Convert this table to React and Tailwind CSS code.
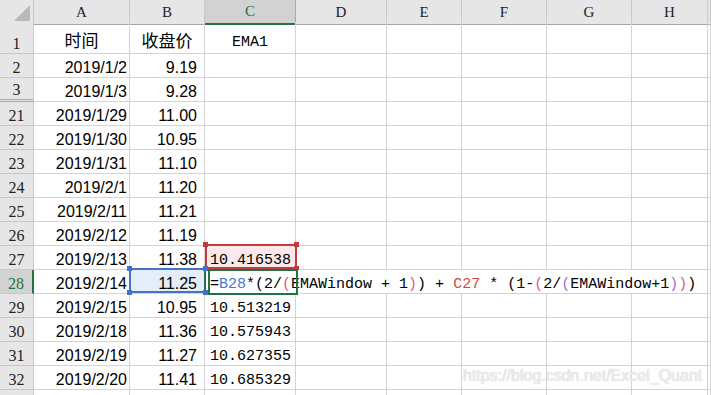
import React from 'react'

const COLS = 'grid grid-cols-[34px_96px_75px_91px_91px_75px_85px_85px_76px_1fr]'

const rows = [
  { n: '1', a: '时间', b: '收盘价', c: 'EMA1', head: true },
  { n: '2', a: '2019/1/2', b: '9.19' },
  { n: '3', a: '2019/1/3', b: '9.28', hidden: true },
  { n: '21', a: '2019/1/29', b: '11.00' },
  { n: '22', a: '2019/1/30', b: '10.95' },
  { n: '23', a: '2019/1/31', b: '11.10' },
  { n: '24', a: '2019/2/1', b: '11.20' },
  { n: '25', a: '2019/2/11', b: '11.21' },
  { n: '26', a: '2019/2/12', b: '11.19' },
  { n: '27', a: '2019/2/13', b: '11.38', c: '10.416538', ref: true },
  { n: '28', a: '2019/2/14', b: '11.25', active: true },
  { n: '29', a: '2019/2/15', b: '10.95', c: '10.513219' },
  { n: '30', a: '2019/2/18', b: '11.36', c: '10.575943' },
  { n: '31', a: '2019/2/19', b: '11.27', c: '10.627355' },
  { n: '32', a: '2019/2/20', b: '11.41', c: '10.685329' },
  { n: '', a: '', b: '' },
]

const formula = [
  ['=', 'text-black'],
  ['B28', 'text-[#4a78cc]'],
  ['*(2/', 'text-black'],
  ['(', 'text-[#e0607a]'],
  ['EMAWindow + 1', 'text-black'],
  [')', 'text-[#e0607a]'],
  [') + ', 'text-black'],
  ['C27', 'text-[#d9433f]'],
  [' * (1-', 'text-black'],
  ['(', 'text-[#e0607a]'],
  ['2/', 'text-black'],
  ['(', 'text-[#a56bd6]'],
  ['EMAWindow+1', 'text-black'],
  [')', 'text-[#a56bd6]'],
  [')', 'text-[#e0607a]'],
  [')', 'text-black'],
]

function Handles({ color }) {
  return (
    <>
      <span className={`absolute -left-[4px] -top-[4px] w-[5px] h-[5px] ${color}`} />
      <span className={`absolute -right-[4px] -top-[4px] w-[5px] h-[5px] ${color}`} />
      <span className={`absolute -left-[4px] -bottom-[4px] w-[5px] h-[5px] ${color}`} />
      <span className={`absolute -right-[4px] -bottom-[4px] w-[5px] h-[5px] ${color}`} />
    </>
  )
}

export default function App() {
  const cell = 'flex items-end border-r border-b border-[#d4d4d4] leading-[18px] whitespace-nowrap overflow-hidden'
  const mono = "font-['Liberation_Mono',monospace] text-[15px] leading-[14px] pb-[1px]"

  return (
    <div className="relative w-[711px] h-[395px] overflow-hidden bg-white font-['Liberation_Sans','Noto_Sans_CJK_SC',sans-serif] text-[16px] text-black">
      {/* column headers */}
      <div className={`${COLS} h-[22px] font-['Liberation_Serif',serif] text-[15px] text-[#222]`}>
        <div className="flex items-end justify-end pr-[3px] pb-[3px] bg-[#e6e6e6] border-r border-b border-r-[#c8c8c8] border-b-[#a6a6a6]">
          <svg width="16" height="16" viewBox="0 0 16 16">
            <polygon points="16,0 16,16 0,16" fill="#b9b9b9" />
          </svg>
        </div>
        {['A', 'B', 'C', 'D', 'E', 'F', 'G', 'H', ''].map((l) =>
          l === 'C' ? (
            <div key={l} className="flex items-center justify-center bg-[#d2d2d2] border-r border-r-[#a9a9a9] border-b-2 border-b-[#217346] text-[#217346]">
              {l}
            </div>
          ) : (
            <div key={l} className="flex items-center justify-center bg-[#e6e6e6] border-r border-b border-r-[#c8c8c8] border-b-[#a6a6a6]">
              {l}
            </div>
          )
        )}
      </div>

      {/* rows */}
      {rows.map((r, i) => (
        <div key={i} className={`${COLS} ${r.head ? 'h-[32px]' : 'h-[24px]'}`}>
          <div
            className={`flex items-end justify-center leading-[18px] font-['Liberation_Serif',serif] text-[16px] border-b ${
              r.active
                ? 'bg-[#d2d2d2] text-[#217346] border-r-2 border-r-[#217346] border-b-[#c8c8c8]'
                : r.hidden
                ? 'bg-[#e6e6e6] text-[#222] border-r border-r-[#c8c8c8] border-b-[3px] border-double border-b-[#a8a8a8]'
                : 'bg-[#e6e6e6] text-[#222] border-r border-[#c8c8c8]'
            }`}
          >
            {r.n}
          </div>
          <div className={`${cell} ${r.head ? 'justify-center pb-[2px] text-[17px]' : 'justify-end pr-[2px]'}`}>{r.a}</div>
          <div className={`${cell} ${r.head ? 'justify-center pb-[2px] text-[17px]' : 'justify-end pr-[7px]'} ${r.active ? 'bg-[#e5edf8]' : ''}`}>
            {r.b}
          </div>
          <div className={`${cell} ${r.head ? 'justify-center' : 'pl-[5px]'} ${r.ref ? 'bg-[#fbe8e8]' : ''}`}>
            {r.c && <span className={`${mono} ${r.head ? 'pb-[3px]' : ''}`}>{r.c}</span>}
          </div>
          <div className={cell} />
          <div className={cell} />
          <div className={cell} />
          <div className={cell} />
          <div className={cell} />
          <div className={cell} />
        </div>
      ))}

      {/* reference box around C27 */}
      <div className="absolute left-[205px] top-[244px] w-[92px] h-[25px] border-2 border-[#c4393e] pointer-events-none">
        <Handles color="bg-[#c4393e]" />
      </div>

      {/* in-cell editor for C28 */}
      <div className={`absolute left-[210px] top-[270px] w-[496px] h-[23px] bg-white flex items-end ${mono} whitespace-nowrap`}>
        {formula.map(([t, c], i) => (
          <span key={i} className={`${c} whitespace-pre`}>{t}</span>
        ))}
      </div>
      <div className="absolute left-[208px] top-[269px] w-[90px] h-[26px] border-2 border-[#217346] pointer-events-none" />

      {/* reference box around B28 */}
      <div className="absolute left-[129px] top-[268px] w-[77px] h-[25px] border-2 border-[#4472c4] border-r-[#217346] pointer-events-none">
        <Handles color="bg-[#4472c4]" />
      </div>

      {/* watermark */}
      <div className="absolute left-[463px] top-[367px] text-[16px] leading-[18px] text-[#f0f0f0] [text-shadow:0_0_1px_rgba(0,0,0,0.3)]">
        https://blog.csdn.net/Excel_Quant
      </div>
    </div>
  )
}
